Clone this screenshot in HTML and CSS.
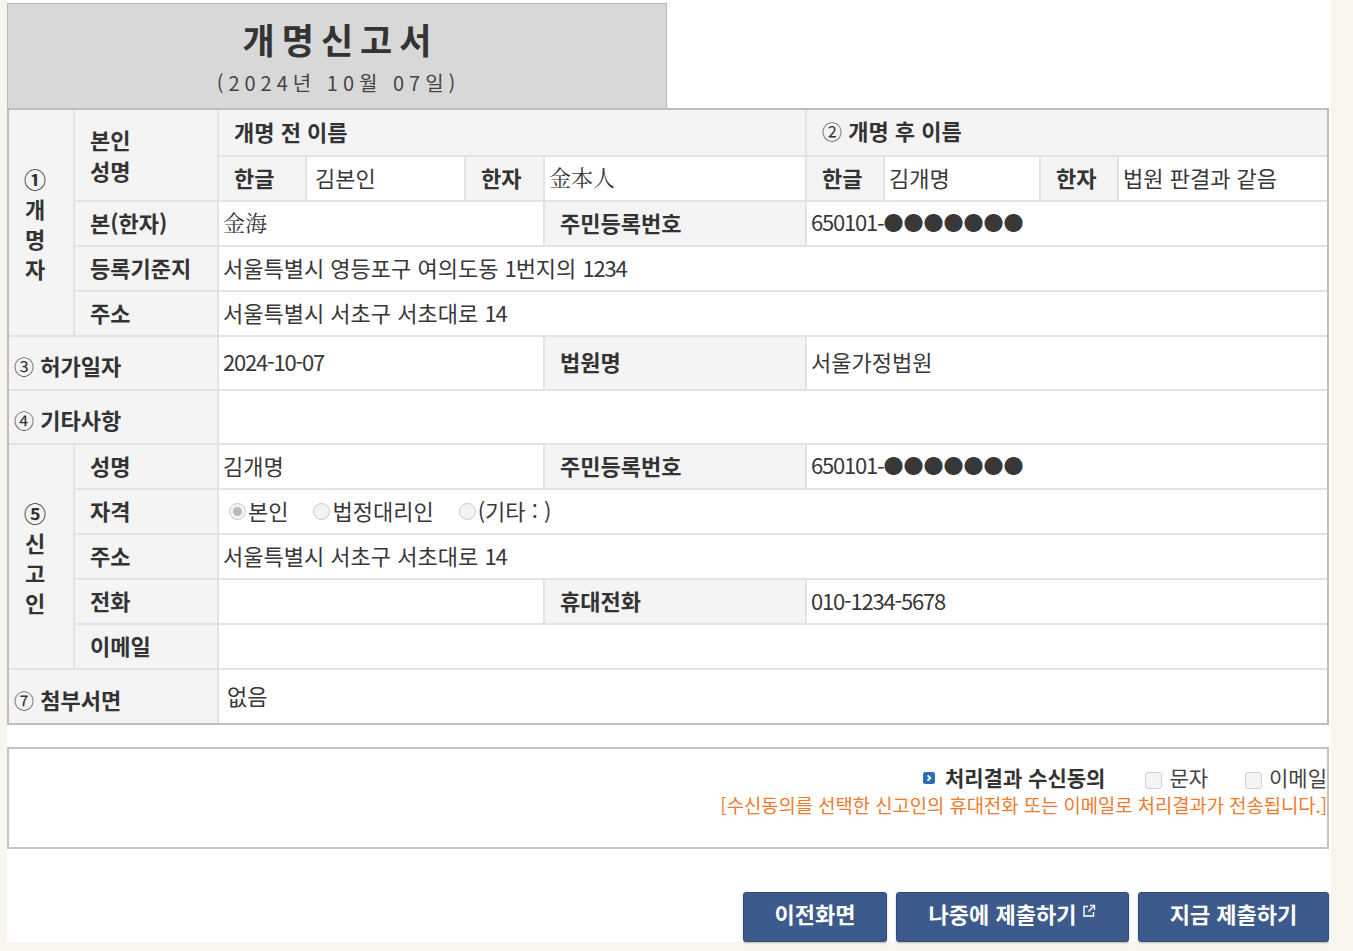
FILE: index.html
```html
<!DOCTYPE html>
<html lang="ko">
<head>
<meta charset="utf-8">
<title>개명신고서</title>
<link rel="stylesheet" href="styles.css">
</head>
<body>
<div class="panel">
  <div class="doc-head">
    <h1 class="doc-title">개명신고서</h1>
    <div class="doc-date">(2024년 10월 07일)</div>
  </div>
  <div class="form-wrap">
    <table class="form">
      <colgroup>
        <col class="c1"><col class="c2"><col class="c3"><col class="c4"><col class="c5">
        <col class="c6"><col class="c7"><col class="c8"><col class="c9"><col class="c10">
      </colgroup>
      <tr class="h46">
        <th rowspan="5" class="vert">①<br>개<br>명<br>자</th>
        <th rowspan="2" class="two">본인<br>성명</th>
        <th colspan="4">개명 전 이름</th>
        <th colspan="4"><span class="num">②</span> 개명 후 이름</th>
      </tr>
      <tr>
        <th>한글</th><td class="pad">김본인</td>
        <th>한자</th><td class="hanja">金本人</td>
        <th>한글</th><td>김개명</td>
        <th>한자</th><td>법원 판결과 같음</td>
      </tr>
      <tr>
        <th>본(한자)</th><td colspan="3" class="hanja">金海</td>
        <th>주민등록번호</th><td colspan="4"><span class="n">650101-</span><span class="dots">●●●●●●●</span></td>
      </tr>
      <tr>
        <th>등록기준지</th><td colspan="8">서울특별시 영등포구 여의도동 <span class="n">1</span>번지의 <span class="n">1234</span></td>
      </tr>
      <tr>
        <th>주소</th><td colspan="8">서울특별시 서초구 서초대로 <span class="n">14</span></td>
      </tr>
      <tr class="h54">
        <th colspan="2" class="lead"><span class="num">③</span> 허가일자</th>
        <td colspan="3"><span class="n">2024-10-07</span></td>
        <th>법원명</th><td colspan="4">서울가정법원</td>
      </tr>
      <tr class="h54">
        <th colspan="2" class="lead"><span class="num">④</span> 기타사항</th>
        <td colspan="8"></td>
      </tr>
      <tr>
        <th rowspan="5" class="vert">⑤<br>신<br>고<br>인</th>
        <th>성명</th><td colspan="3">김개명</td>
        <th>주민등록번호</th><td colspan="4"><span class="n">650101-</span><span class="dots">●●●●●●●</span></td>
      </tr>
      <tr>
        <th>자격</th>
        <td colspan="8">
          <div class="radios">
            <span class="opt"><span class="radio on"></span>본인</span>
            <span class="opt"><span class="radio"></span>법정대리인</span>
            <span class="opt"><span class="radio"></span>(기타 : )</span>
          </div>
        </td>
      </tr>
      <tr>
        <th>주소</th><td colspan="8">서울특별시 서초구 서초대로 <span class="n">14</span></td>
      </tr>
      <tr>
        <th>전화</th><td colspan="3"></td>
        <th>휴대전화</th><td colspan="4"><span class="n">010-1234-5678</span></td>
      </tr>
      <tr>
        <th>이메일</th><td colspan="8"></td>
      </tr>
      <tr class="h54">
        <th colspan="2" class="lead"><span class="num">⑦</span> 첨부서면</th>
        <td colspan="8" class="pad">없음</td>
      </tr>
    </table>
  </div>

  <div class="consent">
    <div class="consent-row">
      <span class="bullet"><svg width="12" height="12" viewBox="0 0 12 12"><rect x="0" y="0" width="12" height="12" rx="2.5" fill="#2f6bb0"/><path d="M4.6 3.3 L7.3 6 L4.6 8.7" fill="none" stroke="#fff" stroke-width="1.8"/></svg></span>
      <strong class="consent-title">처리결과 수신동의</strong>
      <span class="chk-opt"><span class="chk"></span>문자</span>
      <span class="chk-opt"><span class="chk"></span>이메일</span>
    </div>
    <div class="consent-note">[수신동의를 선택한 신고인의 휴대전화 또는 이메일로 처리결과가 전송됩니다.]</div>
  </div>

  <div class="actions">
    <button class="btn b-prev">이전화면</button>
    <button class="btn b-later">나중에 제출하기<svg class="ext" width="14" height="14" viewBox="0 0 14 14"><path d="M6 2.5 H2 V12 H11.5 V8" fill="none" stroke="#fff" stroke-width="1.4"/><path d="M8 1.5 H12.5 V6" fill="none" stroke="#fff" stroke-width="1.4"/><path d="M12.3 1.7 L6.5 7.5" fill="none" stroke="#fff" stroke-width="1.4"/></svg></button>
    <button class="btn b-now">지금 제출하기</button>
  </div>
</div>
</body>
</html>
```

FILE: styles.css
```css
html, body {
  margin: 0;
  padding: 0;
}
body {
  background: #f8f5ed;
  font-family: "Noto Sans CJK KR", "Noto Sans", sans-serif;
  color: #333;
  min-height: 951px;
}
.panel {
  margin-left: 7px;
  width: 1324px;
  background: #fff;
  padding-top: 3px;
  box-sizing: border-box;
}
.doc-head {
  width: 660px;
  height: 105px;
  box-sizing: border-box;
  background: #d8d8d8;
  border: 1px solid #b8b8b8;
  border-bottom: none;
  text-align: center;
  padding-top: 13px;
}
.doc-title {
  margin: 0;
  font-size: 35px;
  line-height: 44px;
  font-weight: 700;
  letter-spacing: 7px;
  color: #333;
  padding-left: 7px;
}
.doc-date {
  font-size: 20px;
  line-height: 30px;
  letter-spacing: 5px;
  color: #444;
  margin-top: 7px;
  padding-left: 3px;
}
.form-wrap {
  width: 1322px;
  box-sizing: border-box;
  border: 2px solid #bdbdbd;
}
.form {
  width: 1318px;
  table-layout: fixed;
  border-collapse: collapse;
  border-style: hidden;
}
.c1 { width: 65px; }
.c2 { width: 144px; }
.c3 { width: 88px; }
.c4 { width: 159px; }
.c5 { width: 79px; }
.c6 { width: 262px; }
.c7 { width: 78px; }
.c8 { width: 156px; }
.c9 { width: 78px; }
.c10 { width: 209px; }
.form tr { height: 45px; }
.form tr.h46 { height: 46px; }
.form tr.h54 { height: 54px; }
.form th, .form td {
  border: 2px solid #e3e3e3;
  padding: 0 0 4px 0;
  font-size: 22px;
  line-height: 28px;
  vertical-align: middle;
  text-align: left;
  white-space: nowrap;
  overflow: hidden;
}
.form th {
  background: #f4f4f4;
  font-weight: 700;
  color: #333;
  padding-left: 15px;
}
.form td {
  background: #fff;
  color: #383838;
  padding-left: 4px;
}
.form td.pad { padding-left: 8px; }
.form th.two { line-height: 31px; padding-bottom: 0; }
.form th.vert {
  text-align: center;
  padding-left: 0;
  padding-right: 12px;
  padding-bottom: 0;
  line-height: 30px;
}
.form th.lead { padding-left: 5px; padding-top: 6px; padding-bottom: 0; }
.num {
  font-size: 20px;
  font-weight: 400;
}
.n {
  letter-spacing: -1.2px;
}
.hanja {
  font-family: "Noto Serif CJK KR", "Liberation Serif", serif;
  font-size: 21px;
}
.dots {
  font-size: 20px;
  letter-spacing: 0;
}
.radios {
  display: flex;
  align-items: center;
  padding-left: 6px;
}
.opt {
  display: inline-flex;
  align-items: center;
  margin-right: 25px;
}
.opt:nth-child(2) { margin-right: 25px; }
.radio {
  width: 15px;
  height: 15px;
  border: 1px solid #c9c9c9;
  border-radius: 50%;
  background: #f3f3f3;
  margin-right: 2px;
  position: relative;
  top: 2px;
  box-sizing: content-box;
}
.radio.on::after {
  content: "";
  position: absolute;
  left: 3px;
  top: 3px;
  width: 9px;
  height: 9px;
  border-radius: 50%;
  background: #b9b9b9;
}
.consent {
  margin-top: 22px;
  width: 1322px;
  height: 102px;
  box-sizing: border-box;
  border: 2px solid #c4c4c4;
  padding-top: 14px;
  text-align: right;
}
.consent-row {
  display: flex;
  justify-content: flex-end;
  align-items: center;
  height: 28px;
}
.bullet {
  display: inline-flex;
  margin-right: 10px;
  position: relative;
  top: 1px;
}
.consent-title {
  font-size: 21px;
  font-weight: 700;
  color: #333;
  margin-right: 40px;
}
.chk-opt {
  display: inline-flex;
  align-items: center;
  font-size: 21px;
  color: #444;
}
.chk-opt + .chk-opt { margin-left: 37px; }
.chk {
  width: 15px;
  height: 15px;
  border: 1px solid #cfcfcf;
  border-radius: 3px;
  background: #f4f4f4;
  margin-right: 7px;
  position: relative;
  top: 3px;
}
.consent-note {
  font-size: 18.75px;
  line-height: 27px;
  color: #ef7a2c;
}
.actions {
  margin-top: 43px;
  margin-bottom: -8px;
  width: 1322px;
  display: flex;
  justify-content: flex-end;
  gap: 9px;
  position: relative;
  z-index: 1;
}
.btn {
  height: 50px;
  border: 1px solid #324d7c;
  border-radius: 3px;
  background: #3d5a8c;
  color: #fff;
  font-family: "Noto Sans CJK KR", "Noto Sans", sans-serif;
  font-size: 22px;
  line-height: 26px;
  font-weight: 700;
  display: inline-flex;
  align-items: center;
  justify-content: center;
  padding: 0 0 9px 0;
  box-shadow: 0 1px 2px rgba(0,0,0,0.25);
}
.b-prev { width: 144px; }
.b-later { width: 233px; }
.b-now { width: 191px; }
.ext { margin-left: 6px; position: relative; top: -2px; }
```
